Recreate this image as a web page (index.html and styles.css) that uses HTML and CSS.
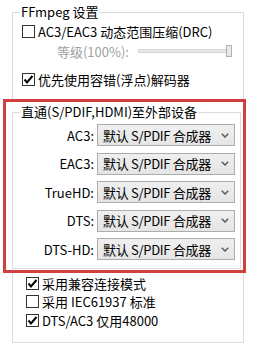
FILE: index.html
```html
<!DOCTYPE html>
<html lang="zh-CN">
<head>
<meta charset="utf-8">
<title>FFmpeg 设置</title>
<link rel="stylesheet" href="styles.css">
</head>
<body>
<fieldset class="group outer">
  <legend class="legend">FFmpeg 设置</legend>
  <label class="check first">
    <span class="box"></span>
    <span class="text">AC3/EAC3 动态范围压缩(DRC)</span>
  </label>
  <div class="slider-row">
    <span class="slider-label">等级(100%):</span>
    <span class="track"><span class="thumb"></span></span>
  </div>
  <label class="check second">
    <span class="box"><svg viewBox="0 0 13 13" width="13" height="13"><polyline points="2.5,6.5 5,9.5 10.5,3" fill="none" stroke="#000" stroke-width="2"/></svg></span>
    <span class="text">优先使用容错(浮点)解码器</span>
  </label>

  <div class="highlight">
    <fieldset class="group inner">
      <legend class="legend">直通(S/PDIF,HDMI)至外部设备</legend>
      <div class="rows">
        <div class="row"><span class="row-label">AC3:</span><span class="combo"><span class="combo-text">默认 S/PDIF 合成器</span><svg class="chev" viewBox="0 0 8 5" width="8" height="5"><polyline points="0.8,0.8 4,4 7.2,0.8" fill="none" stroke="#5a5a5a" stroke-width="1.5"/></svg></span></div>
        <div class="row"><span class="row-label">EAC3:</span><span class="combo"><span class="combo-text">默认 S/PDIF 合成器</span><svg class="chev" viewBox="0 0 8 5" width="8" height="5"><polyline points="0.8,0.8 4,4 7.2,0.8" fill="none" stroke="#5a5a5a" stroke-width="1.5"/></svg></span></div>
        <div class="row"><span class="row-label">TrueHD:</span><span class="combo"><span class="combo-text">默认 S/PDIF 合成器</span><svg class="chev" viewBox="0 0 8 5" width="8" height="5"><polyline points="0.8,0.8 4,4 7.2,0.8" fill="none" stroke="#5a5a5a" stroke-width="1.5"/></svg></span></div>
        <div class="row"><span class="row-label">DTS:</span><span class="combo"><span class="combo-text">默认 S/PDIF 合成器</span><svg class="chev" viewBox="0 0 8 5" width="8" height="5"><polyline points="0.8,0.8 4,4 7.2,0.8" fill="none" stroke="#5a5a5a" stroke-width="1.5"/></svg></span></div>
        <div class="row"><span class="row-label">DTS-HD:</span><span class="combo"><span class="combo-text">默认 S/PDIF 合成器</span><svg class="chev" viewBox="0 0 8 5" width="8" height="5"><polyline points="0.8,0.8 4,4 7.2,0.8" fill="none" stroke="#5a5a5a" stroke-width="1.5"/></svg></span></div>
      </div>
    </fieldset>
  </div>

  <div class="bottom-checks">
    <label class="check">
      <span class="box"><svg viewBox="0 0 13 13" width="13" height="13"><polyline points="2.5,6.5 5,9.5 10.5,3" fill="none" stroke="#000" stroke-width="2"/></svg></span>
      <span class="text">采用兼容连接模式</span>
    </label>
    <label class="check">
      <span class="box"></span>
      <span class="text">采用 IEC61937 标准</span>
    </label>
    <label class="check">
      <span class="box"><svg viewBox="0 0 13 13" width="13" height="13"><polyline points="2.5,6.5 5,9.5 10.5,3" fill="none" stroke="#000" stroke-width="2"/></svg></span>
      <span class="text">DTS/AC3 仅用48000</span>
    </label>
  </div>
</fieldset>
</body>
</html>
```

FILE: styles.css
```css
html, body {
  margin: 0;
  padding: 0;
  background: #ffffff;
}

body {
  font-family: "Noto Sans CJK SC", "Noto Sans", sans-serif;
  font-size: 13px;
  color: #000;
  padding-top: 3px;
  padding-left: 12px;
}

.group {
  margin: 0;
  padding: 0;
  border: 1px solid #dcdcdc;
  min-width: 0;
}

.outer {
  width: 232px;
  height: 340px;
  box-sizing: border-box;
}

.legend {
  padding: 0 1px;
  margin-left: 7px;
  line-height: 18px;
  height: 18px;
}

.check {
  display: flex;
  align-items: center;
  height: 18px;
  gap: 3px;
  white-space: nowrap;
}

.check.first {
  margin-top: 1px;
  margin-left: 9px;
}

.check.second {
  margin-top: 10px;
  margin-left: 9px;
}

.box {
  width: 13px;
  height: 13px;
  box-sizing: border-box;
  border: 1px solid #333;
  background: #fff;
  display: flex;
  align-items: center;
  justify-content: center;
  flex: none;
}

.box svg {
  display: block;
  flex: none;
}

.slider-row {
  display: flex;
  align-items: center;
  height: 18px;
  margin-top: 2px;
}

.slider-label {
  color: #a0a0a0;
  width: 116px;
  text-align: right;
  white-space: nowrap;
}

.track {
  position: relative;
  margin-left: 9px;
  width: 93px;
  height: 4px;
  box-sizing: border-box;
  border: 1px solid #d6d6d6;
  background: #e7e7e7;
}

.thumb {
  position: absolute;
  right: -2px;
  top: -5px;
  width: 6px;
  height: 12px;
  box-sizing: border-box;
  border: 1px solid #b0b0b0;
  background: #e9e9e9;
}

.highlight {
  margin: 11px -3px 0 -10px;
  border: 3px solid #d0403e;
  background: #fff;
  padding: 1px 2px 1px 6px;
}

.inner {
  padding-bottom: 8px;
}

.rows {
  display: flex;
  flex-direction: column;
  gap: 6.5px;
  margin-top: 3px;
}

.row {
  display: flex;
  align-items: center;
  height: 22px;
}

.row-label {
  width: 81px;
  text-align: right;
  white-space: nowrap;
}

.combo {
  margin-left: 3px;
  width: 138px;
  height: 22px;
  box-sizing: border-box;
  border: 1px solid #acacac;
  background: linear-gradient(#efefef, #e5e5e5);
  display: flex;
  align-items: center;
  padding-left: 5px;
  padding-right: 5px;
}

.combo-text {
  flex: 1;
  white-space: nowrap;
  letter-spacing: -0.3px;
}

.chev {
  display: block;
  flex: none;
}

.bottom-checks {
  margin-left: 13px;
  margin-top: 1px;
  display: flex;
  flex-direction: column;
  gap: 0.5px;
}
```
